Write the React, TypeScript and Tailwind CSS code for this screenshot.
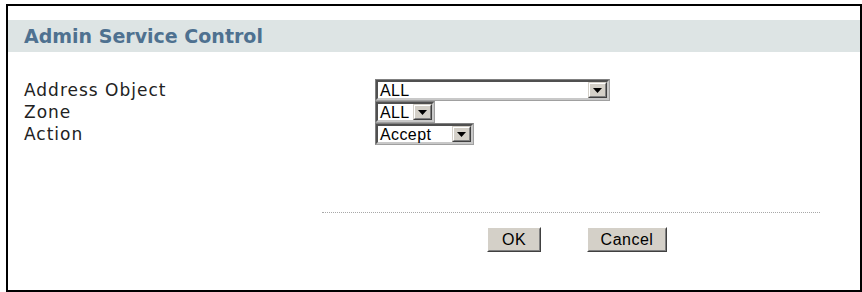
import type { ReactNode } from "react";

const labelFont = "font-['DejaVu_Sans',Verdana,sans-serif]";
const winFont = "font-['Liberation_Sans',Arial,sans-serif]";

function Arrow() {
  return (
    <div className="flex h-full w-[19px] shrink-0 items-center justify-center border border-t-[#d4d0c8] border-l-[#d4d0c8] border-b-[#404040] border-r-[#404040] bg-[#d4d0c8]">
      <div className="flex h-full w-full items-center justify-center border border-t-white border-l-white border-b-[#808080] border-r-[#808080]">
        <svg width="9" height="5" viewBox="0 0 9 5">
          <path d="M0 0h9L4.5 5z" fill="#000" />
        </svg>
      </div>
    </div>
  );
}

function Select({ value, width }: { value: string; width: string }) {
  return (
    <div className={`h-[22px] ${width} border border-t-[#808080] border-l-[#808080] border-b-[#a0a0a0] border-r-[#a0a0a0]`}>
      <div className="flex h-full border-2 border-t-[#505050] border-l-[#505050] border-b-[#c8c8c8] border-r-[#c8c8c8] bg-white">
        <span className={`flex-1 whitespace-nowrap pl-[2px] text-[16px] leading-[17px] tracking-[0.4px] text-black ${winFont}`}>
          {value}
        </span>
        <Arrow />
      </div>
    </div>
  );
}

function Row({ label, children }: { label: string; children: ReactNode }) {
  return (
    <div className="flex h-[22px] items-center">
      <span className={`w-[351px] pt-[2px] text-[17px] tracking-[1px] text-[#222] ${labelFont}`}>{label}</span>
      {children}
    </div>
  );
}

function Button({ children, width }: { children: ReactNode; width: string }) {
  return (
    <div className={`h-[25px] ${width} border border-t-white border-l-white border-b-[#404040] border-r-[#404040] bg-[#d4d0c8]`}>
      <div className={`flex h-full items-center justify-center border border-t-[#d4d0c8] border-l-[#d4d0c8] border-b-[#808080] border-r-[#808080] text-[16px] tracking-[0.5px] text-black ${winFont}`}>
        {children}
      </div>
    </div>
  );
}

export default function App() {
  return (
    <div className="h-[292px] w-[862px] bg-white pl-[6px] pt-[4px]">
      <div className="h-[288px] w-[856px] border-2 border-black pt-[14px]">
        <div className="flex h-[32px] items-center bg-[#dde4e4] pl-[16px]">
          <h2 className={`text-[19px] font-bold text-[#4e7190] ${labelFont}`}>
            Admin Service Control
          </h2>
        </div>

        <div className="mt-[27px] flex flex-col pl-[16px]">
          <Row label="Address Object">
            <Select value="ALL" width="w-[235px]" />
          </Row>
          <Row label="Zone">
            <Select value="ALL" width="w-[60px]" />
          </Row>
          <Row label="Action">
            <Select value="Accept" width="w-[99px]" />
          </Row>
        </div>

        <div className="ml-[314px] mt-[67px] w-[498px] border-t border-dotted border-[#a8a8a8]" />

        <div className="mt-[14px] flex pl-[479px]">
          <Button width="w-[54px]">OK</Button>
          <div className="w-[46px]" />
          <Button width="w-[80px]">Cancel</Button>
        </div>
      </div>
    </div>
  );
}
